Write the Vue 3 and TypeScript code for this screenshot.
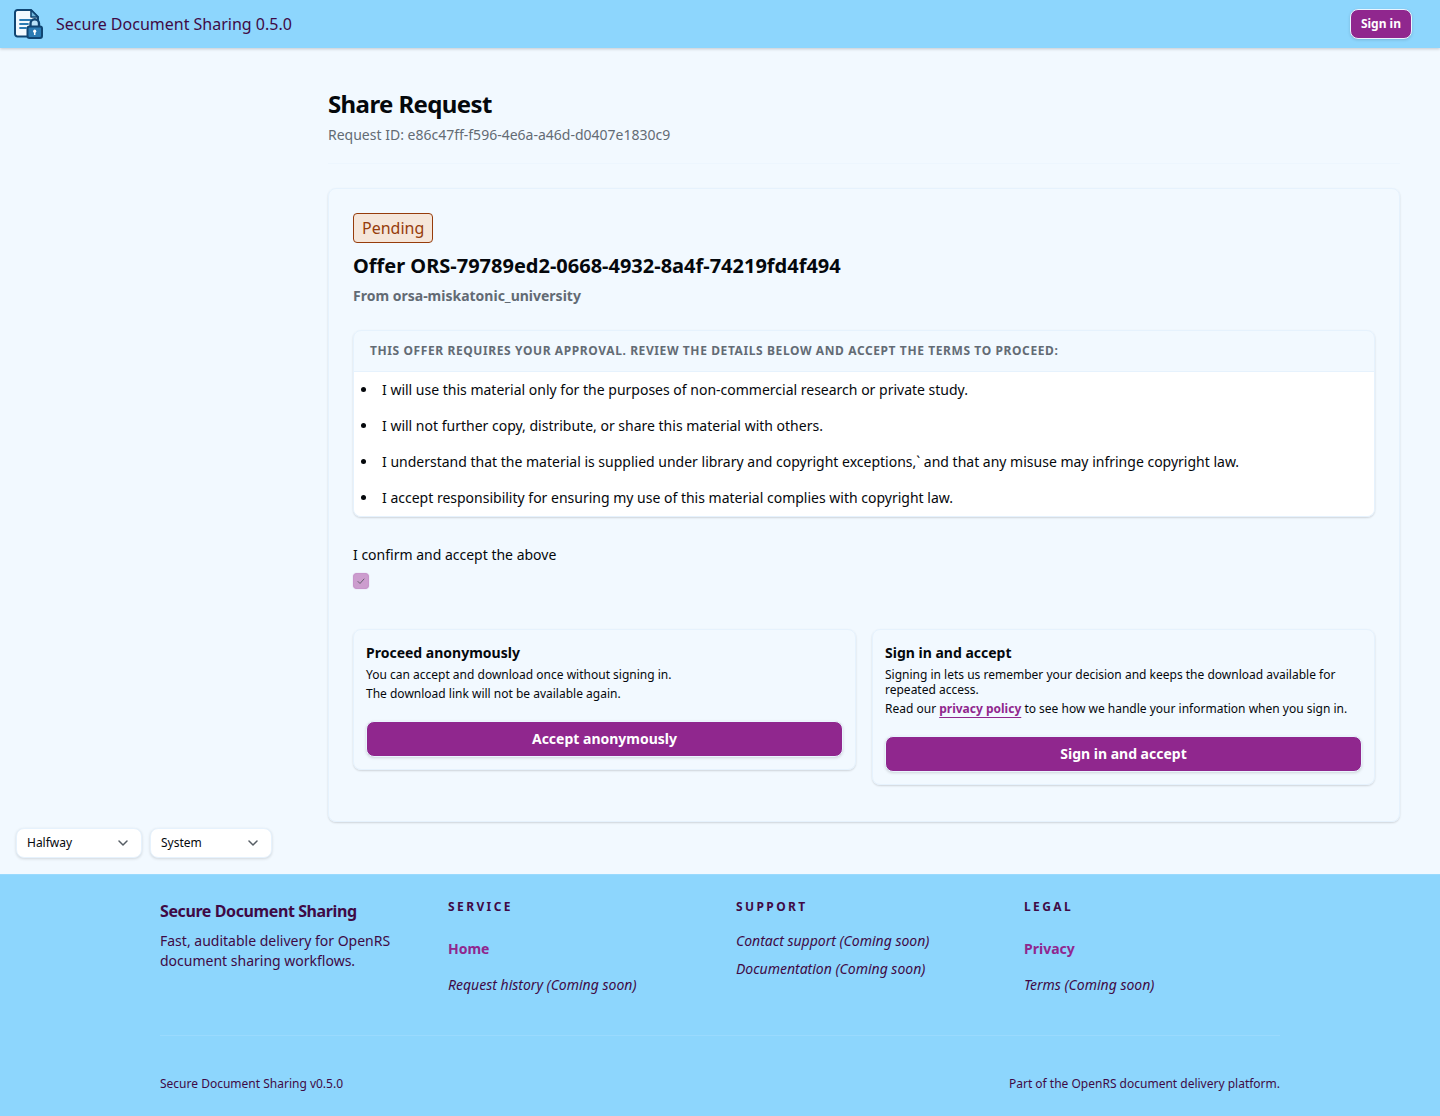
<script setup lang="ts">
import { ref } from 'vue'

interface FooterItem {
  label: string
  href?: string
}

interface FooterSection {
  title: string
  items: FooterItem[]
}

const version = '0.5.0'
const requestId = 'e86c47ff-f596-4e6a-a46d-d0407e1830c9'
const offerId = 'ORS-79789ed2-0668-4932-8a4f-74219fd4f494'
const sender = 'orsa-miskatonic_university'

const theme = ref('Halfway')
const mode = ref('System')
const accepted = ref(true)

const terms: string[] = [
  'I will use this material only for the purposes of non-commercial research or private study.',
  'I will not further copy, distribute, or share this material with others.',
  'I understand that the material is supplied under library and copyright exceptions,` and that any misuse may infringe copyright law.',
  'I accept responsibility for ensuring my use of this material complies with copyright law.',
]

const sections: FooterSection[] = [
  { title: 'Service', items: [{ label: 'Home', href: '#home' }, { label: 'Request history (Coming soon)' }] },
  { title: 'Support', items: [{ label: 'Contact support (Coming soon)' }, { label: 'Documentation (Coming soon)' }] },
  { title: 'Legal', items: [{ label: 'Privacy', href: '#privacy' }, { label: 'Terms (Coming soon)' }] },
]
</script>

<template>
  <div class="page">
    <header class="topbar">
      <svg class="logo" viewBox="0 0 32 32" aria-hidden="true">
        <path d="M5.500 2H19l7 7v19.500H5.500a2.500 2.500 0 0 1-2.500-2.500V4.500A2.500 2.500 0 0 1 5.500 2z" fill="#f3f9fe" stroke="#104572" stroke-width="2" stroke-linejoin="round" />
        <path d="M19 2v7h7z" fill="#6eb5da" stroke="#104572" stroke-width="1.600" stroke-linejoin="round" />
        <path d="M8 12h11M8 16h8M8 20h6" stroke="#2b7bb3" stroke-width="1.800" stroke-linecap="round" />
        <path d="M18.500 19v-3.500a4 4 0 0 1 8.500 0V19" fill="#b9e2f8" stroke="#104572" stroke-width="2.400" />
        <rect x="15.500" y="18.500" width="14.500" height="11.500" rx="2" fill="#2b7bb3" stroke="#104572" stroke-width="2" />
        <circle cx="22.700" cy="23.200" r="1.600" fill="#fff" />
        <path d="M22.700 23v4" stroke="#fff" stroke-width="1.500" />
      </svg>
      <span class="brand">Secure Document Sharing {{ version }}</span>
      <button type="button" class="btn btn-small">Sign in</button>
    </header>

    <div class="body">
      <aside class="sidebar">
        <div class="picker picker-theme">
          <select v-model="theme" aria-label="Theme">
            <option>Halfway</option>
          </select>
          <svg viewBox="0 0 16 16" aria-hidden="true"><path d="M4 6l4 4 4-4" /></svg>
        </div>
        <div class="picker picker-mode">
          <select v-model="mode" aria-label="Colour mode">
            <option>System</option>
            <option>Light</option>
            <option>Dark</option>
          </select>
          <svg viewBox="0 0 16 16" aria-hidden="true"><path d="M4 6l4 4 4-4" /></svg>
        </div>
      </aside>

      <main class="main">
        <div class="heading">
          <h1>Share Request</h1>
          <p>Request ID: {{ requestId }}</p>
        </div>

        <section class="card offer">
          <span class="badge">Pending</span>
          <h2>Offer {{ offerId }}</h2>
          <p class="from">From {{ sender }}</p>

          <div class="card terms">
            <h3>This offer requires your approval. Review the details below and accept the terms to proceed:</h3>
            <ul>
              <li v-for="term in terms" :key="term">{{ term }}</li>
            </ul>
          </div>

          <div class="confirm">
            <label for="confirm">I confirm and accept the above</label>
            <span class="tick">
              <input id="confirm" v-model="accepted" type="checkbox" disabled />
              <svg viewBox="0 0 16 16" aria-hidden="true"><path d="M5 8.500l2 2 4-4.500" /></svg>
            </span>
          </div>

          <div class="choices">
            <div class="card choice">
              <h4>Proceed anonymously</h4>
              <p>You can accept and download once without signing in.</p>
              <p>The download link will not be available again.</p>
              <button type="button" class="btn">Accept anonymously</button>
            </div>
            <div class="card choice">
              <h4>Sign in and accept</h4>
              <p>Signing in lets us remember your decision and keeps the download available for repeated access.</p>
              <p>Read our <a href="#privacy">privacy policy</a> to see how we handle your information when you sign in.</p>
              <button type="button" class="btn">Sign in and accept</button>
            </div>
          </div>
        </section>
      </main>
    </div>

    <footer class="footer">
      <div class="footer-inner">
        <div class="columns">
          <div>
            <p class="footer-brand">Secure Document Sharing</p>
            <p class="tagline">Fast, auditable delivery for OpenRS document sharing workflows.</p>
          </div>
          <nav v-for="section in sections" :key="section.title" :aria-label="section.title">
            <h5>{{ section.title }}</h5>
            <ul>
              <li v-for="item in section.items" :key="item.label">
                <a v-if="item.href" :href="item.href">{{ item.label }}</a>
                <em v-else>{{ item.label }}</em>
              </li>
            </ul>
          </nav>
        </div>
        <div class="legal">
          <span>Secure Document Sharing v{{ version }}</span>
          <span>Part of the OpenRS document delivery platform.</span>
        </div>
      </div>
    </footer>
  </div>
</template>

<style>
body {
  margin: 0;
  background: #f2f9ff;
}
</style>

<style scoped>
.page {
  --sky: #8dd6fd;
  --plum: #90278e;
  --ink: #3f0a45;
  --muted: #636b74;
  --line: #e6f2fd;
  display: flex;
  flex-direction: column;
  min-height: 100vh;
  background: #f2f9ff;
  color: #05080c;
  font-family: "Noto Sans", sans-serif;
  font-size: 14px;
  line-height: 20px;
}

*,
*::before,
*::after {
  box-sizing: border-box;
}

h1, h2, h3, h4, h5, p, ul {
  margin: 0;
  padding: 0;
}

h1, h2, h3, h4, h5 {
  font-weight: 700;
}

.topbar {
  display: flex;
  align-items: center;
  gap: 12px;
  height: 48px;
  padding: 0 28px 0 12px;
  background: var(--sky);
  color: var(--ink);
  box-shadow: 0 1px 3px rgba(0, 0, 0, 0.2);
}

.logo {
  width: 32px;
  height: 32px;
}

.brand {
  flex: 1;
  font-size: 16px;
  line-height: 24px;
}

.btn {
  display: block;
  width: 100%;
  height: 36px;
  padding: 0 9px;
  border: 1px solid #eaf5ff;
  border-radius: 8px;
  background: var(--plum);
  box-shadow: 0 1px 3px rgba(0, 0, 0, 0.15);
  color: #fff;
  font: 700 14px/20px "Noto Sans", sans-serif;
  cursor: pointer;
}

.btn-small {
  width: auto;
  height: 30px;
  padding: 0 10px;
  font-size: 12px;
  line-height: 16px;
}

.body {
  display: flex;
  flex: 1;
}

.sidebar {
  display: flex;
  flex: none;
  align-items: flex-end;
  gap: 8px;
  width: 288px;
  padding: 16px;
}

.picker {
  position: relative;
}

.picker-theme {
  width: 126px;
}

.picker-mode {
  width: 122px;
}

.picker select {
  display: block;
  width: 100%;
  height: 30px;
  padding: 0 32px 0 10px;
  border: 1px solid var(--line);
  border-radius: 8px;
  appearance: none;
  background: #fff;
  box-shadow: 0 1px 3px rgba(0, 0, 0, 0.14);
  color: #05080c;
  font: 400 12px/16px "Noto Sans", sans-serif;
}

.picker svg {
  position: absolute;
  top: 7px;
  right: 11px;
  width: 16px;
  height: 16px;
  fill: none;
  stroke: #565d64;
  stroke-width: 1.5;
  stroke-linecap: round;
  stroke-linejoin: round;
  pointer-events: none;
}

.main {
  flex: 1;
  min-width: 0;
  padding: 40px 40px 52px;
}

.heading {
  margin-bottom: 24px;
  padding-bottom: 18px;
  border-bottom: 1px solid #edf6fe;
}

h1 {
  font-size: 24px;
  line-height: 32px;
  letter-spacing: -0.025em;
}

.heading p {
  margin-top: 5px;
  color: var(--muted);
}

.card {
  border: 1px solid var(--line);
  border-radius: 8px;
  box-shadow: 0 1px 2px rgba(0, 0, 0, 0.15);
}

.offer {
  padding: 24px 24px 36px;
}

.badge {
  display: block;
  width: fit-content;
  padding: 2px 8px;
  border: 1px solid #963c0b;
  border-radius: 4px;
  background: #f5e6da;
  color: #963c0b;
  font-size: 16px;
  line-height: 24px;
}

h2 {
  margin-top: 9px;
  font-size: 20px;
  line-height: 28px;
}

.from {
  margin-top: 6px;
  color: var(--muted);
  font-weight: 700;
}

.terms {
  margin-top: 24px;
  overflow: hidden;
}

h3 {
  padding: 12px 16px;
  border-bottom: 1px solid var(--line);
  color: var(--muted);
  font-size: 12px;
  line-height: 16px;
  letter-spacing: 0.05em;
  text-transform: uppercase;
}

.terms ul {
  padding-left: 24px;
  background: #fff;
}

.terms li {
  padding: 8px 8px 8px 4px;
}

.confirm {
  display: flex;
  flex-direction: column;
  align-items: flex-start;
  gap: 8px;
  margin: 28px 0 40px;
}

.tick {
  position: relative;
  width: 16px;
  height: 16px;
}

.tick input {
  display: block;
  width: 16px;
  height: 16px;
  margin: 0;
  border: 1px solid #c795cb;
  border-radius: 4px;
  appearance: none;
  background: #cc9dce;
  box-shadow: 0 0 1px #c795cb;
}

.tick svg {
  position: absolute;
  inset: 0;
  fill: none;
  stroke: #66606e;
  stroke-linecap: round;
  stroke-linejoin: round;
}

.choices {
  display: grid;
  grid-template-columns: 1fr 1fr;
  align-items: start;
  gap: 16px;
}

.choice {
  padding: 12px;
}

h4 {
  line-height: 21px;
}

.choice p {
  margin-top: 4px;
  font-size: 12px;
  line-height: 15px;
}

.choice a {
  color: var(--plum);
  font-weight: 700;
  text-underline-offset: 4px;
}

.choice .btn {
  margin-top: 20px;
}

.footer {
  padding: 24px 32px;
  border-top: 1px solid #9adafe;
  background: var(--sky);
  color: var(--ink);
}

.footer-inner {
  max-width: 1120px;
  margin: 0 auto;
}

.columns {
  display: grid;
  grid-template-columns: repeat(4, 1fr);
  gap: 32px;
}

.footer-brand {
  font-size: 16px;
  font-weight: 700;
  line-height: 24px;
  letter-spacing: -0.025em;
}

.tagline {
  margin-top: 8px;
}

h5 {
  font-size: 12px;
  line-height: 16px;
  letter-spacing: 0.2em;
  text-transform: uppercase;
}

.footer ul {
  display: flex;
  flex-direction: column;
  gap: 8px;
  margin-top: 16px;
  list-style: none;
}

.footer a {
  display: inline-flex;
  align-items: center;
  height: 36px;
  color: var(--plum);
  font-weight: 700;
  text-decoration: none;
  vertical-align: top;
}

.legal {
  display: flex;
  justify-content: space-between;
  margin-top: 40px;
  padding-top: 40px;
  border-top: 1px solid #9adafe;
  font-size: 12px;
  line-height: 16px;
}
</style>
